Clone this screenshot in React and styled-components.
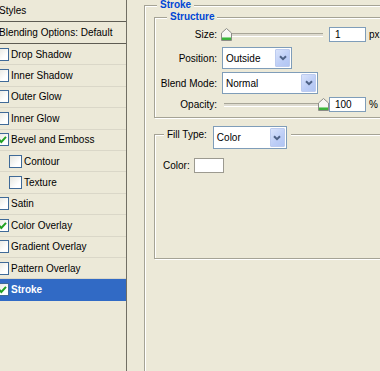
import React from "react";
import styled, { createGlobalStyle } from "styled-components";

const GlobalStyle = createGlobalStyle`
  html, body { margin: 0; padding: 0; background: #ece9d8; }
  body {
    font-family: "Liberation Sans", Arial, sans-serif;
    font-size: 10px;
    color: #000;
  }
`;

const styles = [
  { name: "Drop Shadow" },
  { name: "Inner Shadow" },
  { name: "Outer Glow" },
  { name: "Inner Glow" },
  { name: "Bevel and Emboss", checked: true },
  { name: "Contour", indent: true },
  { name: "Texture", indent: true },
  { name: "Satin" },
  { name: "Color Overlay", checked: true },
  { name: "Gradient Overlay" },
  { name: "Pattern Overlay" },
  { name: "Stroke", checked: true, selected: true },
];

const Window = styled.div`
  display: flex;
  width: 380px;
  height: 371px;
  overflow: hidden;
  background: #ece9d8;
`;

const Sidebar = styled.div`
  width: 126px;
  flex: none;
  display: flex;
  flex-direction: column;
  border-right: 1px solid #716f64;
`;

const HeadRow = styled.div`
  height: 22px;
  box-sizing: border-box;
  display: flex;
  align-items: center;
  border-bottom: 1px solid #5e5c53;
  white-space: nowrap;
`;

const HeadText = styled.span`
  margin-left: -1px;
`;

const Item = styled.div`
  height: 21.4px;
  box-sizing: border-box;
  display: flex;
  align-items: center;
  gap: 2px;
  white-space: nowrap;
  border-bottom: 1px solid ${(p) => (p.$selected ? "#316ac5" : "#dad7c8")};
  background: ${(p) => (p.$selected ? "#316ac5" : "transparent")};
  color: ${(p) => (p.$selected ? "#fff" : "#000")};
  font-weight: ${(p) => (p.$selected ? "bold" : "normal")};
`;

const Box = styled.span`
  width: 13px;
  height: 13px;
  flex: none;
  box-sizing: border-box;
  margin-left: ${(p) => (p.$indent ? 9 : -4)}px;
  border: 1px solid #3f6a98;
  background: linear-gradient(135deg, #e6e6df 0%, #fff 70%);
  display: flex;
  align-items: center;
  justify-content: center;
`;

const Main = styled.div`
  flex: 1;
  overflow: hidden;
  padding-left: 17px;
`;

const Group = styled.fieldset`
  margin: ${(p) => p.$mt}px 0 0 0;
  padding: 0 0 ${(p) => p.$pb}px ${(p) => p.$pl}px;
  width: ${(p) => p.$w}px;
  min-width: 0;
  border: 1px solid #a5a395;
  box-shadow: inset 1px 1px 0 #fff, 1px 1px 0 #fff;
`;

const Legend = styled.legend`
  margin-left: ${(p) => p.$ml}px;
  padding: 0 3px;
  line-height: ${(p) => p.$lh || 12}px;
  background: #ece9d8;
  font-weight: bold;
  color: #0046d5;
`;

const FillLegend = styled.legend`
  margin-left: 9px;
  padding: 0 4px 0 3px;
  height: 16px;
  display: flex;
  align-items: flex-start;
  background: #ece9d8;
`;

const FillLabel = styled.span`
  margin-top: 3px;
  line-height: 12px;
`;

const Row = styled.div`
  display: flex;
  align-items: center;
  margin-top: ${(p) => p.$mt}px;
  height: ${(p) => p.$h}px;
`;

const Label = styled.span`
  width: 62px;
  text-align: right;
  margin-right: 4px;
  white-space: nowrap;
`;

const SliderWrap = styled.div`
  position: relative;
  width: 106px;
  height: 15px;
  display: flex;
  align-items: center;
  margin-right: 2px;
`;

const Track = styled.div`
  margin: 1px 4px 0 3px;
  flex: 1;
  height: 2px;
  border-top: 1px solid #a8a698;
  border-bottom: 1px solid #fff;
  background: #dedbd0;
`;

const Thumb = styled.svg`
  position: absolute;
  top: 1px;
`;

const NumBox = styled.div`
  width: 37px;
  height: 15px;
  box-sizing: border-box;
  border: 1px solid #7f9db9;
  background: #fff;
  padding-left: 5px;
  display: flex;
  align-items: center;
`;

const Unit = styled.span`
  margin-left: 3px;
`;

const Select = styled.div`
  width: ${(p) => p.$w}px;
  height: ${(p) => p.$h}px;
  margin-left: ${(p) => p.$ml || 0}px;
  box-sizing: border-box;
  border: 1px solid #7f9db9;
  background: #fff;
  display: flex;
  align-items: center;
  padding: 1px 1px 1px 3px;
`;

const SelectText = styled.span`
  flex: 1;
`;

const Arrow = styled.div`
  width: 15px;
  height: 100%;
  box-sizing: border-box;
  border: 1px solid #bccbef;
  border-radius: 1px;
  background: linear-gradient(135deg, #d9e3fb 0%, #bccdf6 60%, #b1c5f3 100%);
  display: flex;
  align-items: center;
  justify-content: center;
`;

const ColorRow = styled.div`
  display: flex;
  align-items: center;
  gap: 4px;
  margin: 16px 0 0 8px;
`;

const Swatch = styled.div`
  width: 30px;
  height: 15px;
  box-sizing: border-box;
  border: 1px solid #9c9a90;
  background: #fff;
`;

function Check() {
  return (
    <svg width="9" height="9" viewBox="0 0 9 9">
      <polyline points="1,4.5 3.3,7 8,1.8" fill="none" stroke="#21a121" strokeWidth="2" />
    </svg>
  );
}

function Slider({ value }) {
  return (
    <SliderWrap>
      <Track />
      <Thumb width="11" height="13" viewBox="0 0 11 13" style={{ left: `${value * 0.97}px` }}>
        <path d="M0.5 5 L5.5 0.5 L10.5 5 V12.5 H0.5 Z" fill="#f7f7f4" stroke="#8c8c86" />
        <rect x="1" y="9.5" width="9" height="2.5" fill="#3cb43c" />
        <rect x="1" y="9" width="9" height="1" fill="#8fd88f" />
      </Thumb>
    </SliderWrap>
  );
}

function Dropdown({ text, w, h, ml }) {
  return (
    <Select $w={w} $h={h} $ml={ml}>
      <SelectText>{text}</SelectText>
      <Arrow>
        <svg width="8" height="6" viewBox="0 0 8 6">
          <polyline points="1,1.2 4,4.2 7,1.2" fill="none" stroke="#4d6185" strokeWidth="2" />
        </svg>
      </Arrow>
    </Select>
  );
}

export default function App() {
  return (
    <Window>
      <GlobalStyle />
      <Sidebar>
        <HeadRow>
          <HeadText>Styles</HeadText>
        </HeadRow>
        <HeadRow>
          <HeadText>Blending Options: Default</HeadText>
        </HeadRow>
        {styles.map((s) => (
          <Item key={s.name} $selected={s.selected}>
            <Box $indent={s.indent}>{s.checked && <Check />}</Box>
            <span>{s.name}</span>
          </Item>
        ))}
      </Sidebar>
      <Main>
        <Group $mt={0} $pl={9} $pb={200} $w={262}>
          <Legend $ml={3} $lh={10}>Stroke</Legend>
          <Group $mt={1} $pl={0} $pb={5} $w={240}>
            <Legend $ml={12}>Structure</Legend>
            <Row $mt={4} $h={15}>
              <Label>Size:</Label>
              <Slider value={0} />
              <NumBox>1</NumBox>
              <Unit>px</Unit>
            </Row>
            <Row $mt={5} $h={22}>
              <Label>Position:</Label>
              <Dropdown text="Outside" w={70} h={22} ml={1} />
            </Row>
            <Row $mt={3} $h={22}>
              <Label>Blend Mode:</Label>
              <Dropdown text="Normal" w={96} h={22} ml={1} />
            </Row>
            <Row $mt={3} $h={15}>
              <Label>Opacity:</Label>
              <Slider value={100} />
              <NumBox>100</NumBox>
              <Unit>%</Unit>
            </Row>
          </Group>
          <Group $mt={8} $pl={0} $pb={85} $w={240}>
            <FillLegend>
              <FillLabel>Fill Type:</FillLabel>
              <Dropdown text="Color" w={74} h={23} ml={6} />
            </FillLegend>
            <ColorRow>
              <span>Color:</span>
              <Swatch />
            </ColorRow>
          </Group>
        </Group>
      </Main>
    </Window>
  );
}
